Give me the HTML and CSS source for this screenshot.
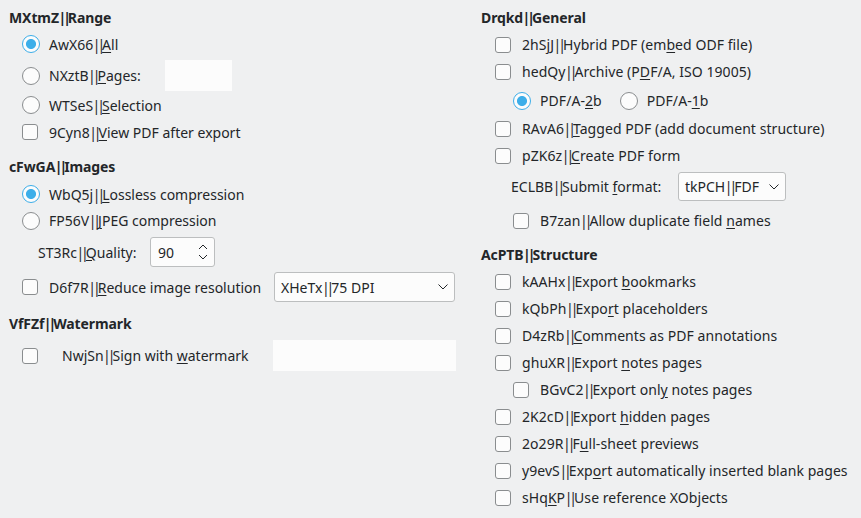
FILE: index.html
```html
<!DOCTYPE html>
<html>
<head>
<meta charset="utf-8">
<link rel="stylesheet" href="styles.css">
</head>
<body>
<div class="page">
  <div class="col left">
    <div class="heading h-first">MXtmZ<span class="p">||</span>Range</div>
    <div class="row r28"><span class="ctl"><span class="radio on"></span></span><span class="lbl">AwX66<span class="p">||</span><u>A</u>ll</span></div>
    <div class="row r31 pages-row"><span class="ctl"><span class="radio"></span></span><span class="lbl w-pages">NXztB<span class="p">||</span><u>P</u>ages:</span><span class="field pages"></span></div>
    <div class="row r28"><span class="ctl"><span class="radio"></span></span><span class="lbl">WTSeS<span class="p">||</span><u>S</u>election</span></div>
    <div class="row r26"><span class="ctl"><span class="check"></span></span><span class="lbl">9Cyn8<span class="p">||</span><u>V</u>iew PDF after export</span></div>

    <div class="heading h-images">cFwGA<span class="p">||</span>Images</div>
    <div class="row r26"><span class="ctl"><span class="radio on"></span></span><span class="lbl">WbQ5j<span class="p">||</span><u>L</u>ossless compression</span></div>
    <div class="row r27"><span class="ctl"><span class="radio"></span></span><span class="lbl">FP56V<span class="p">||</span><u>J</u>PEG compression</span></div>
    <div class="row r30 quality"><span class="lbl w-quality">ST3Rc<span class="p">||</span><u>Q</u>uality:</span>
      <span class="spin"><span class="spin-val">90</span>
        <svg class="spin-arrows" width="10" height="16" viewBox="0 0 10 16"><polyline points="1,5 5,1 9,5" fill="none" stroke="#232629" stroke-width="1"/><polyline points="1,11 5,15 9,11" fill="none" stroke="#232629" stroke-width="1"/></svg>
      </span>
    </div>
    <div class="row r30 reduce"><span class="ctl"><span class="check"></span></span><span class="lbl w-reduce">D6f7R<span class="p">||</span><u>R</u>educe image resolution</span>
      <span class="combo dpi"><span>XHeTx<span class="p">||</span>75 DPI</span>
        <svg class="chev" width="10" height="6" viewBox="0 0 10 6"><polyline points="0.5,0.5 5,5 9.5,0.5" fill="none" stroke="#232629" stroke-width="1"/></svg>
      </span>
    </div>

    <div class="heading h-water">VfFZf<span class="p">||</span>Watermark</div>
    <div class="row r31 water"><span class="ctl"><span class="check"></span></span><span class="lbl wlbl">NwjSn<span class="p">||</span>Sign with <u>w</u>atermark</span><span class="field wfield"></span></div>
  </div>

  <div class="col right">
    <div class="heading h-first">Drqkd<span class="p">||</span>General</div>
    <div class="row r27"><span class="ctl"><span class="check"></span></span><span class="lbl">2hSjJ<span class="p">||</span>Hybrid PDF (em<u>b</u>ed ODF file)</span></div>
    <div class="row r27"><span class="ctl"><span class="check"></span></span><span class="lbl">hedQy<span class="p">||</span>Archive (P<u>D</u>F/A, ISO 19005)</span></div>
    <div class="row r27 ind pdfa"><span class="ctl"><span class="radio on"></span></span><span class="lbl">PDF/A-<u>2</u>b</span><span class="ctl second"><span class="radio"></span></span><span class="lbl">PDF/A-<u>1</u>b</span></div>
    <div class="row r27 tagged"><span class="ctl"><span class="check"></span></span><span class="lbl">RAvA6<span class="p">||</span><u>T</u>agged PDF (add document structure)</span></div>
    <div class="row r27"><span class="ctl"><span class="check"></span></span><span class="lbl">pZK6z<span class="p">||</span><u>C</u>reate PDF form</span></div>
    <div class="row r29 submit"><span class="lbl w-submit">ECLBB<span class="p">||</span>Submit <u>f</u>ormat:</span>
      <span class="combo fmt"><span>tkPCH<span class="p">||</span>FDF</span>
        <svg class="chev" width="10" height="6" viewBox="0 0 10 6"><polyline points="0.5,0.5 5,5 9.5,0.5" fill="none" stroke="#232629" stroke-width="1"/></svg>
      </span>
    </div>
    <div class="row r27 ind dup"><span class="ctl"><span class="check"></span></span><span class="lbl">B7zan<span class="p">||</span>Allow duplicate field <u>n</u>ames</span></div>

    <div class="heading h-struct">AcPTB<span class="p">||</span>Structure</div>
    <div class="row r27"><span class="ctl"><span class="check"></span></span><span class="lbl">kAAHx<span class="p">||</span>Export <u>b</u>ookmarks</span></div>
    <div class="row r27"><span class="ctl"><span class="check"></span></span><span class="lbl">kQbPh<span class="p">||</span>Expo<u>r</u>t placeholders</span></div>
    <div class="row r27"><span class="ctl"><span class="check"></span></span><span class="lbl">D4zRb<span class="p">||</span><u>C</u>omments as PDF annotations</span></div>
    <div class="row r27"><span class="ctl"><span class="check"></span></span><span class="lbl">ghuXR<span class="p">||</span>Export <u>n</u>otes pages</span></div>
    <div class="row r27 ind"><span class="ctl"><span class="check"></span></span><span class="lbl">BGvC2<span class="p">||</span>Export onl<u>y</u> notes pages</span></div>
    <div class="row r27"><span class="ctl"><span class="check"></span></span><span class="lbl">2K2cD<span class="p">||</span>Export <u>h</u>idden pages</span></div>
    <div class="row r27"><span class="ctl"><span class="check"></span></span><span class="lbl">2o29R<span class="p">||</span>F<u>u</u>ll-sheet previews</span></div>
    <div class="row r27"><span class="ctl"><span class="check"></span></span><span class="lbl">y9evS<span class="p">||</span>Exp<u>o</u>rt automatically inserted blank pages</span></div>
    <div class="row r27"><span class="ctl"><span class="check"></span></span><span class="lbl">sHq<u>K</u>P<span class="p">||</span>Use reference XObjects</span></div>
  </div>
</div>
</body>
</html>
```

FILE: styles.css
```css
html, body {
  margin: 0;
  padding: 0;
  background: #eff0f1;
}
body {
  width: 861px;
  height: 518px;
  overflow: hidden;
  font-family: "Noto Sans", "DejaVu Sans", sans-serif;
  font-size: 14px;
  color: #232629;
}
.page {
  display: grid;
  grid-template-columns: 481px 1fr;
}
.col {
  display: flex;
  flex-direction: column;
}
.left {
  padding-left: 9px;
}
.p {
  letter-spacing: -3px;
  margin-left: -0.5px;
}
.heading {
  font-weight: bold;
  height: 20px;
  line-height: 20px;
  letter-spacing: -0.1px;
}
.h-first { margin-top: 8px; }
.left .h-first { margin-bottom: 2px; }
.right .h-first { margin-bottom: 3px; }
.h-images { margin-top: 12px; margin-bottom: 4px; }
.h-water { margin-top: 12px; margin-bottom: 6px; }
.h-struct { margin-top: 11px; margin-bottom: 3px; }

.row {
  display: flex;
  align-items: center;
  padding-left: 13px;
}
.right .row { padding-left: 14px; }
.r26 { height: 26px; }
.r27 { height: 27px; }
.r28 { height: 28px; }
.r29 { height: 29px; }
.r30 { height: 30px; }
.r31 { height: 31px; }
.pages-row { margin-top: 2px; }
.ctl {
  width: 18px;
  height: 18px;
  margin-right: 9px;
  display: flex;
  align-items: center;
  flex: none;
}
.radio {
  width: 18px;
  height: 18px;
  box-sizing: border-box;
  border-radius: 50%;
  border: 1px solid #8a8d8f;
  background: #fcfcfc;
}
.radio.on {
  border-color: #3daee9;
  background: radial-gradient(circle at center, #3daee9 0, #3daee9 4.6px, #fcfcfc 5.4px);
}
.check {
  width: 16px;
  height: 16px;
  box-sizing: border-box;
  border: 1px solid #8a8d8f;
  border-radius: 3px;
  background: #fcfcfc;
}
.lbl { white-space: nowrap; }
.right .lbl { letter-spacing: 0.06px; }
u { text-underline-offset: 2px; }

.w-pages { width: 116px; }
.w-quality { width: 112px; }
.w-reduce { width: 225px; }
.right .w-submit { width: 167px; letter-spacing: 0; }

.field {
  background: #fcfcfc;
  height: 31px;
}
.pages { width: 67px; }
.quality { padding-left: 29px; margin-top: 3px; }
.spin {
  width: 65px;
  height: 30px;
  box-sizing: border-box;
  border: 1px solid #bcbebf;
  border-radius: 3px;
  background: #fcfcfc;
  display: flex;
  align-items: center;
  padding-left: 7px;
  padding-right: 6px;
}
.spin-val { flex: 1; }
.reduce { margin-top: 5px; }
.combo {
  height: 30px;
  box-sizing: border-box;
  border: 1px solid #bcbebf;
  border-radius: 3px;
  background: #fcfcfc;
  display: flex;
  align-items: center;
  justify-content: space-between;
  padding-left: 6px;
  padding-right: 6px;
}
.dpi { width: 181px; }
.fmt {
  width: 108px;
  height: 29px;
}
.water .wlbl { margin-left: 13px; width: 211px; }
.wfield { width: 183px; }

.right .ind { padding-left: 32px; }
.pdfa { margin-top: 2px; }
.tagged { margin-top: 1px; }
.second { margin-left: 18px; }
.submit { padding-left: 30px !important; margin-top: 3px; }
.dup { margin-top: 6px; }
```
